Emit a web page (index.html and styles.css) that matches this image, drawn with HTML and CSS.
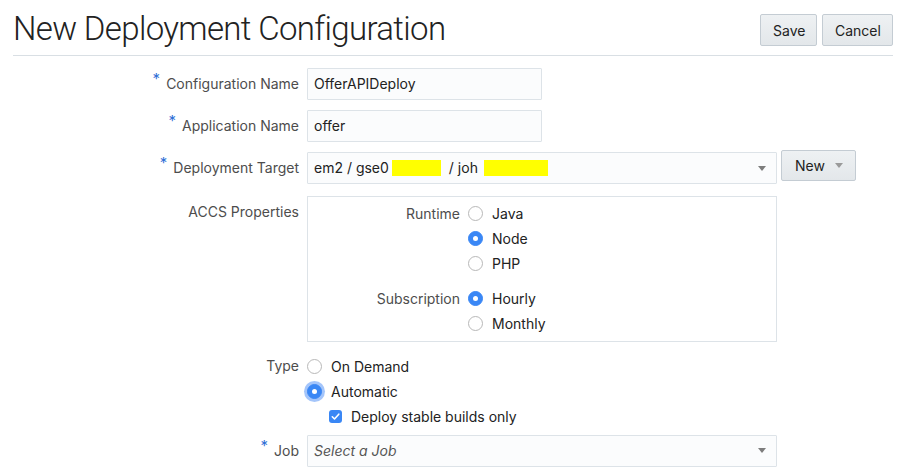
FILE: index.html
```html
<!DOCTYPE html>
<html>
<head>
<meta charset="utf-8">
<title>New Deployment Configuration</title>
<link rel="stylesheet" href="styles.css">
</head>
<body>
<div class="page">
  <header class="head">
    <h1 class="title">New Deployment Configuration</h1>
    <div class="actions">
      <button class="btn btn-save">Save</button>
      <button class="btn btn-cancel">Cancel</button>
    </div>
  </header>

  <form class="form">
    <div class="row row-first">
      <label class="lbl"><span class="req">*</span>Configuration Name</label>
      <div class="field"><div class="input input-short">OfferAPIDeploy</div></div>
    </div>
    <div class="row row-second">
      <label class="lbl"><span class="req">*</span>Application Name</label>
      <div class="field"><div class="input input-short">offer</div></div>
    </div>
    <div class="row row-target">
      <label class="lbl"><span class="req">*</span>Deployment Target</label>
      <div class="field field-inline">
        <div class="input select">
          <span class="val">em2 / gse0<span class="mask mask-a"></span>/ joh<span class="mask mask-b"></span></span>
          <span class="caret"></span>
        </div>
        <button class="btn btn-new" type="button">New<span class="caret caret-btn"></span></button>
      </div>
    </div>
    <div class="row row-accs">
      <label class="lbl">ACCS Properties</label>
      <div class="field">
        <div class="accs">
          <div class="group">
            <div class="glabel">Runtime</div>
            <div class="options">
              <div class="opt"><span class="radio"></span>Java</div>
              <div class="opt"><span class="radio on"></span>Node</div>
              <div class="opt"><span class="radio"></span>PHP</div>
            </div>
          </div>
          <div class="group group-sub">
            <div class="glabel">Subscription</div>
            <div class="options">
              <div class="opt"><span class="radio on"></span>Hourly</div>
              <div class="opt"><span class="radio"></span>Monthly</div>
            </div>
          </div>
        </div>
      </div>
    </div>
    <div class="row row-type">
      <label class="lbl lbl-line">Type</label>
      <div class="field">
        <div class="options">
          <div class="opt"><span class="radio"></span>On Demand</div>
          <div class="opt"><span class="radio on focus"></span>Automatic</div>
          <div class="opt opt-check"><span class="check"><svg viewBox="0 0 13 13" width="13" height="13"><path d="M3.3 6.8 L5.5 9 L9.8 4.2" fill="none" stroke="#fff" stroke-width="1.6" stroke-linecap="round" stroke-linejoin="round"/></svg></span>Deploy stable builds only</div>
        </div>
      </div>
    </div>
    <div class="row row-job">
      <label class="lbl"><span class="req">*</span>Job</label>
      <div class="field">
        <div class="input select placeholder">
          <span class="val">Select a Job</span>
          <span class="caret"></span>
        </div>
      </div>
    </div>
  </form>
</div>
</body>
</html>
```

FILE: styles.css
```css
html, body {
  margin: 0;
  padding: 0;
  background: #ffffff;
}

body {
  font-family: "Inter", "Liberation Sans", Arial, sans-serif;
  color: #333333;
}

.page {
  padding: 0 22px 0 13px;
  width: 880px;
}

.head {
  display: flex;
  justify-content: space-between;
  align-items: flex-start;
  height: 56px;
  box-sizing: border-box;
  border-bottom: 1px solid #d9dfe4;
}

.title {
  margin: 9px 0 0 0;
  font-family: "Roboto", "Liberation Sans", sans-serif;
  font-weight: 300;
  font-size: 33px;
  line-height: 40px;
  color: #222222;
  letter-spacing: -0.65px;
}

.actions {
  display: flex;
  gap: 5px;
  margin-top: 14px;
}

.btn {
  font-family: "Inter", "Liberation Sans", Arial, sans-serif;
  font-size: 14px;
  color: #222222;
  height: 32px;
  padding: 0 12px;
  border: 1px solid #c4ccd3;
  border-radius: 2px;
  background: linear-gradient(#eef1f3, #e3e7ea);
  box-sizing: border-box;
}

.btn-save { width: 57px; }
.btn-cancel { width: 71px; }

.form {
  padding-top: 12px;
}

.row {
  display: grid;
  grid-template-columns: 286px 1fr;
  column-gap: 8px;
}

.row-second { margin-top: 10px; }
.row-target { margin-top: 10px; }
.row-accs { margin-top: 12px; }
.row-type { margin-top: 14px; }
.row-job { margin-top: 6px; }

.lbl {
  text-align: right;
  font-size: 14px;
  line-height: 32px;
  color: #4d4d4d;
}

.lbl-line {
  line-height: 20px;
}

.req {
  color: #2f6fd6;
  font-size: 15px;
  position: relative;
  top: -5px;
  margin-right: 6px;
}

.field-inline {
  display: flex;
  align-items: flex-start;
  gap: 4px;
}

.input {
  height: 32px;
  box-sizing: border-box;
  border: 1px solid #dde3e8;
  background: #fbfcfd;
  border-radius: 1px;
  padding: 0 6px;
  font-size: 14px;
  line-height: 30px;
  color: #222222;
  display: flex;
  align-items: center;
}

.input-short { width: 235px; }

.select {
  width: 470px;
  justify-content: space-between;
  padding-right: 10px;
}

.placeholder .val {
  font-style: italic;
  color: #555555;
}

.val {
  display: flex;
  align-items: center;
}

.mask {
  display: inline-block;
  height: 16px;
  background: #ffff00;
}

.mask-a { width: 49px; margin: 0 8px 0 3px; }
.mask-b { width: 64px; margin-left: 6px; }

.caret {
  width: 0;
  height: 0;
  border-left: 4px solid transparent;
  border-right: 4px solid transparent;
  border-top: 5px solid #7d7d7d;
}

.btn-new {
  width: 75px;
  height: 31px;
  margin-top: -2px;
  display: flex;
  align-items: center;
  padding: 0 0 0 13px;
}

.caret-btn {
  margin-left: 10px;
  border-top-color: #9a9a9a;
}

.accs {
  width: 470px;
  box-sizing: border-box;
  border: 1px solid #dde3e8;
  padding: 4px 0 5px 0;
}

.group {
  display: grid;
  grid-template-columns: 152px 1fr;
  column-gap: 8px;
}

.group-sub {
  margin-top: 10px;
}

.glabel {
  text-align: right;
  font-size: 14px;
  line-height: 25px;
  color: #4d4d4d;
}

.options {
  display: flex;
  flex-direction: column;
}

.opt {
  display: flex;
  align-items: center;
  height: 25px;
  font-size: 14px;
  color: #222222;
}

.row-type .options {
  margin-top: -2.5px;
}

.radio {
  width: 15px;
  height: 15px;
  box-sizing: border-box;
  border: 1px solid #b8b8b8;
  border-radius: 50%;
  background: #ffffff;
  margin-right: 9px;
  display: inline-flex;
  align-items: center;
  justify-content: center;
  flex: none;
}

.radio.on {
  background: #3a87f5;
  border-color: #3a87f5;
}

.radio.on::after {
  content: "";
  width: 5px;
  height: 5px;
  border-radius: 50%;
  background: #ffffff;
}

.radio.focus {
  box-shadow: 0 0 0 3px rgba(90, 150, 245, 0.55);
}

.opt-check {
  padding-left: 22px;
}

.check {
  width: 13px;
  height: 13px;
  border-radius: 3px;
  background: #3a87f5;
  margin-right: 9px;
  display: inline-flex;
  flex: none;
}
```
